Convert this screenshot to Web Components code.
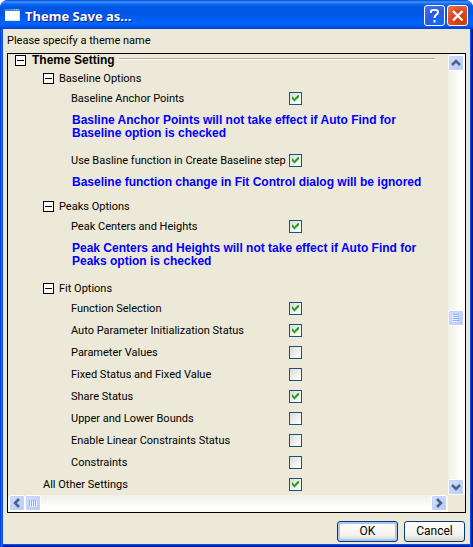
<!DOCTYPE html>
<html lang="en">
<head>
<meta charset="utf-8">
<title>Theme Save as...</title>
<style>
  html, body { height: 100%; }
  body { margin: 0; background: #fff; font: 11px/13px Roboto, "Liberation Sans", sans-serif; color: #000; }
</style>
</head>
<body>
<xp-dialog>
  <xp-titlebar slot="title">Theme Save as...</xp-titlebar>
  <span slot="message">Please specify a theme name</span>
  <scroll-panel>
    <tree-root>Theme Setting</tree-root>
    <tree-group>
      <span slot="name">Baseline Options</span>
      <check-row checked>Baseline Anchor Points</check-row>
      <info-note>Basline Anchor Points will not take effect if Auto Find for Baseline option is checked</info-note>
      <check-row checked>Use Basline function in Create Baseline step</check-row>
      <info-note>Baseline function change in Fit Control dialog will be ignored</info-note>
    </tree-group>
    <tree-group>
      <span slot="name">Peaks Options</span>
      <check-row checked>Peak Centers and Heights</check-row>
      <info-note roomy>Peak Centers and Heights will not take effect if Auto Find for Peaks option is checked</info-note>
    </tree-group>
    <tree-group>
      <span slot="name">Fit Options</span>
      <check-row checked>Function Selection</check-row>
      <check-row checked>Auto Parameter Initialization Status</check-row>
      <check-row>Parameter Values</check-row>
      <check-row>Fixed Status and Fixed Value</check-row>
      <check-row checked>Share Status</check-row>
      <check-row>Upper and Lower Bounds</check-row>
      <check-row>Enable Linear Constraints Status</check-row>
      <check-row>Constraints</check-row>
    </tree-group>
    <check-row outer checked>All Other Settings</check-row>
  </scroll-panel>
  <xp-button slot="actions" primary>OK</xp-button>
  <xp-button slot="actions">Cancel</xp-button>
</xp-dialog>

<script>
const define = (name, html, setup) => {
  const template = document.createElement('template');
  template.innerHTML = html;
  customElements.define(name, class extends HTMLElement {
    constructor() {
      super();
      this.attachShadow({ mode: 'open' }).append(template.content.cloneNode(true));
    }
    connectedCallback() { if (setup) setup(this, this.shadowRoot); }
  });
};

define('xp-dialog', `
  <style>
    :host { display: flex; flex-direction: column; box-sizing: border-box; min-height: 100vh;
      border-radius: 8px 8px 0 0; overflow: hidden; padding: 0 3px 3px;
      background: linear-gradient(90deg, #0a3fd8 0 1px, #1468f4 1px 2px, #0050e8 2px calc(100% - 2px), #0024b4 calc(100% - 2px) calc(100% - 1px), #00138c calc(100% - 1px)); }
    header { margin: 0 -3px; }
    main { flex: 1; display: flex; flex-direction: column; background: #ece9d8; padding: 3px 4px 0;
      box-shadow: 0 1px #0050ee, 0 2px #0030c0, 0 3px #001494; }
    p { margin: 0 0 4px; line-height: 17px; }
    footer { display: flex; justify-content: flex-end; gap: 6px; padding: 8px 1px 2px; }
  </style>
  <header><slot name="title"></slot></header>
  <main>
    <p><slot name="message"></slot></p>
    <slot></slot>
    <footer><slot name="actions"></slot></footer>
  </main>`);

define('xp-titlebar', `
  <style>
    :host { display: flex; align-items: center; box-sizing: border-box; height: 29px; padding: 2px 5px 0;
      background: linear-gradient(#0b47cf 0, #3d95ff 2px, #0a6af5 4px, #0058e6 7px, #0054e3 13px, #005cf3 18px, #0066ff 23px, #005cf0 26px, #003dd7 29px); }
    h1 { flex: 1; margin: 0 0 0 5px; font: bold 13px/18px "Noto Sans", sans-serif; color: #fff; text-shadow: 1px 1px #0a1883; }
    svg { display: block; }
    button { width: 21px; height: 21px; padding: 0; margin-left: 2px; border: 1px solid #fff; border-radius: 3px; color: #fff; }
    .help { background: radial-gradient(circle at 75% 85%, #0a6cf8, #2b5be6 55%, #4b7af0); }
    .close { background: radial-gradient(circle at 75% 85%, #d23a06, #dc4a22 55%, #ee7a58); }
  </style>
  <svg width="15" height="13" viewBox="0 0 15 13" aria-hidden="true">
    <path fill="#fff" d="M0 1h15v11H0z"/><path fill="#2a96d8" d="M0 0h15v2H0z"/>
    <path fill="#b9def5" d="M9 0h1v1H9zM11 0h1v1h-1z"/><path fill="#e49a63" d="M13 0h1v1h-1z"/>
    <path fill="#d9e6f5" d="M14 2h1v10H0v-1h14z"/>
  </svg>
  <h1><slot></slot></h1>
  <button class="help" aria-label="Help"><svg width="19" height="19" viewBox="0 0 19 19" fill="none" stroke="#fff" stroke-width="2"><path d="M6 7V5.500Q6 4 8 4h2.500Q13 4 13 6t-2 3q-1.500 1-1.500 3"/><path d="M9.500 14v2.500"/></svg></button>
  <button class="close" aria-label="Close"><svg width="19" height="19" viewBox="0 0 19 19" fill="none" stroke="#fff" stroke-width="2.300"><path d="M5 5l9.500 9.500M14.500 5L5 14.500"/></svg></button>`);

define('scroll-panel', `
  <style>
    :host { flex: 1; display: grid; grid-template: 1fr 17px / 1fr 17px; border: 1px solid #000; min-height: 0; }
    .content { min-width: 0; }
  </style>
  <div class="content"><slot></slot></div>
  <scroll-bar direction="vertical"></scroll-bar>
  <scroll-bar direction="horizontal"></scroll-bar>`);

define('scroll-bar', `
  <style>
    :host { display: flex; flex-direction: column; box-sizing: border-box; padding: 1px 1px 0 0;
      background: linear-gradient(90deg, #f0efe8, #fefefb 70%); --before: 238; --after: 152; }
    :host([direction=horizontal]) { flex-direction: row; padding: 0 1px 1px 1px;
      background: linear-gradient(#f0efe8, #fefefb 70%); --before: 0; --after: 1; }
    button, .thumb { flex: none; box-sizing: border-box; width: 16px; height: 16px; padding: 0; border: 1px solid #fff; border-radius: 2px;
      background: linear-gradient(135deg, #d5e0fd, #b4c8f8); box-shadow: inset 0 0 0 1px #c2d3fc, inset -1px -1px #a3b9e8; }
    svg { display: block; width: 14px; height: 14px; fill: none; stroke: #4d6185; stroke-width: 2.500; }
    .thumb svg { stroke-width: 1; stroke: #8cb0f8; }
    .before { flex: var(--before); } .after { flex: var(--after); }
    :host([direction=horizontal]) .back svg, :host([direction=horizontal]) .next svg, :host([direction=horizontal]) .thumb svg { transform: rotate(-90deg); }
  </style>
  <button class="back" aria-label="Scroll back"><svg viewBox="0 0 14 14"><path d="M3 9l4-4 4 4"/></svg></button>
  <div class="before"></div>
  <div class="thumb"><svg viewBox="0 0 14 14"><path d="M4 3.500h6M4 5.500h6M4 7.500h6M4 9.500h6"/><path stroke="#eef4fe" d="M3 4.500h6M3 6.500h6M3 8.500h6M3 10.500h6"/></svg></div>
  <div class="after"></div>
  <button class="next" aria-label="Scroll forward"><svg viewBox="0 0 14 14"><path d="M3 5l4 4 4-4"/></svg></button>`);

define('tree-toggle', `
  <style>
    :host { display: block; flex: none; }
    button { display: block; box-sizing: border-box; width: 11px; height: 11px; padding: 0; border: 1px solid #000; background: linear-gradient(#000, #000) center / 7px 1px no-repeat #fff; }
  </style>
  <button aria-label="Collapse" aria-expanded="true"></button>`);

define('tree-root', `
  <style>
    :host { display: flex; align-items: center; gap: 6px; height: 12px; margin: 0 13px 4px 7px; font: bold 12px/13px "Liberation Sans", Arial, sans-serif; }
    hr { flex: 1; height: 1px; margin: 0 0 3px -2px; border: 0; background: #aca899; box-shadow: 0 1px #fff; }
  </style>
  <tree-toggle></tree-toggle><span><slot></slot></span><hr>`);

define('tree-group', `
  <style>
    :host { display: block; }
    div { display: flex; align-items: center; gap: 5px; height: 17px; padding-left: 35px; }
  </style>
  <div><tree-toggle></tree-toggle><slot name="name"></slot></div>
  <slot></slot>`);

define('check-row', `
  <style>
    :host { display: grid; grid-template-columns: 281px auto; align-items: center; height: 22px; }
    label { padding-left: 63px; white-space: nowrap; }
    :host([outer]) label { padding-left: 35px; }
    input { appearance: none; display: block; box-sizing: border-box; width: 13px; height: 13px; margin: 0; border: 1px solid #1c5180;
      background: linear-gradient(135deg, #dcdcd7, #fff); }
    input:checked::before { content: ""; display: block; width: 7px; height: 7px; margin: 2px; background: #21a121;
      clip-path: polygon(0 2px, 1px 2px, 1px 3px, 2px 3px, 2px 4px, 3px 4px, 3px 3px, 4px 3px, 4px 2px, 5px 2px, 5px 1px, 6px 1px, 6px 0, 7px 0, 7px 3px, 6px 3px, 6px 4px, 5px 4px, 5px 5px, 4px 5px, 4px 6px, 3px 6px, 3px 7px, 2px 7px, 2px 6px, 1px 6px, 1px 5px, 0 5px); }
  </style>
  <label for="box"><slot></slot></label><input id="box" type="checkbox">`,
  (host, root) => { root.querySelector('input').checked = host.hasAttribute('checked'); });

define('info-note', `
  <style>
    :host { display: block; padding: 5px 24px 9px 64px; font: bold 12px/13px "Liberation Sans", Arial, sans-serif; color: #00f; }
    :host([roomy]) { padding-bottom: 12px; }
  </style>
  <slot></slot>`);

define('xp-button', `
  <style>
    :host { display: block; }
    button { display: block; box-sizing: border-box; min-width: 61px; height: 21px; padding: 0 8px; font: 12px/17px Roboto, "Liberation Sans", sans-serif; color: #000;
      border: 1px solid #003c74; border-radius: 3px; background: linear-gradient(#fff, #f3f2ed 70%, #d9d3c8); }
    :host([primary]) button { box-shadow: inset 0 0 0 2px #a9c4f5, inset 0 -1px #6982ee; }
  </style>
  <button><slot></slot></button>`);
</script>
</body>
</html>
